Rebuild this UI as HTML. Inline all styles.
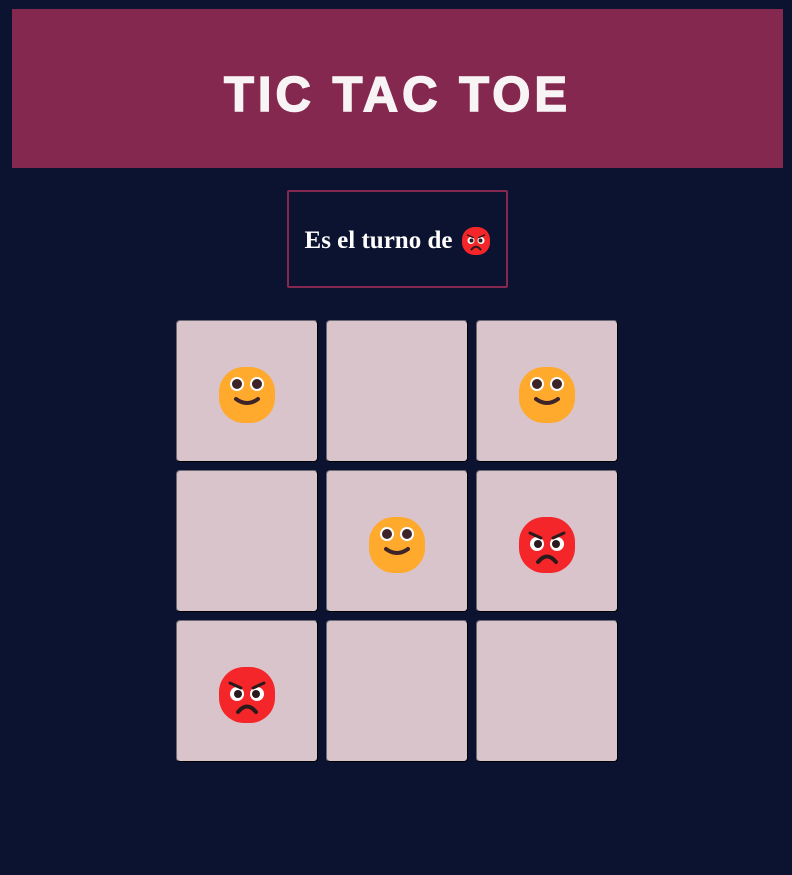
<!DOCTYPE html>
<html><head><style>
body{margin:0;background:#0c1330;width:792px;height:875px;position:relative;overflow:hidden;font-family:"Liberation Serif",serif}
.hdr{position:absolute;left:12px;top:9px;width:771px;height:159px;background:#85284f}
.hdr h1{margin:0;position:absolute;left:0;right:0;top:61px;text-align:center;color:#f8f4f6;font:900 49px/50px "Liberation Sans",sans-serif;letter-spacing:4px;-webkit-text-stroke:1.5px #f8f4f6}
.st{position:absolute;left:287px;top:190px;width:221px;height:98px;box-sizing:border-box;border:2px solid #85284f;border-radius:2px;color:#fff;font-weight:bold;font-size:25px;display:flex;align-items:center;justify-content:center;gap:10px;padding-top:4px}
.cell{position:absolute;width:140px;height:140px;background:#d9c4cc;border:1px solid;border-color:#6c6a74 #000 #000 #6c6a74;border-radius:4px}
.cell svg{position:absolute;left:42px;top:46px}
</style></head><body>
<div class="hdr"><h1>TIC TAC TOE</h1></div>
<div class="st">Es el turno de <svg width="28" height="28" viewBox="0 0 56 56"><use href="#a"/></svg></div>
<svg width="0" height="0" style="position:absolute">
<defs>
<g id="h"><rect x="0" y="0" width="56" height="56" rx="25" fill="#ffa92d"/>
<circle cx="18" cy="17" r="7" fill="#fff"/><circle cx="38" cy="17" r="7" fill="#fff"/>
<circle cx="18" cy="17" r="5" fill="#3d2428"/><circle cx="38" cy="17" r="5" fill="#3d2428"/>
<path d="M17 32Q28 40 39 32" stroke="#3d2428" stroke-width="4" fill="none" stroke-linecap="round"/></g>
<g id="a"><rect x="0" y="0" width="56" height="56" rx="25" fill="#f4262a"/>
<circle cx="18" cy="27" r="7" fill="#fff"/><circle cx="38" cy="27" r="7" fill="#fff"/>
<circle cx="19" cy="27" r="4" fill="#2a1a1c"/><circle cx="37" cy="27" r="4" fill="#2a1a1c"/>
<path d="M11 16L22 21M45 16L34 21" stroke="#2a1a1c" stroke-width="3" stroke-linecap="round"/>
<path d="M19 45Q28 34 37 45" stroke="#2a1a1c" stroke-width="4" fill="none" stroke-linecap="round"/></g>
</defs></svg>
<div class="cell" style="left:176px;top:320px"><svg width="56" height="56"><use href="#h"/></svg></div>
<div class="cell" style="left:326px;top:320px"></div>
<div class="cell" style="left:476px;top:320px"><svg width="56" height="56"><use href="#h"/></svg></div>
<div class="cell" style="left:176px;top:470px"></div>
<div class="cell" style="left:326px;top:470px"><svg width="56" height="56"><use href="#h"/></svg></div>
<div class="cell" style="left:476px;top:470px"><svg width="56" height="56"><use href="#a"/></svg></div>
<div class="cell" style="left:176px;top:620px"><svg width="56" height="56"><use href="#a"/></svg></div>
<div class="cell" style="left:326px;top:620px"></div>
<div class="cell" style="left:476px;top:620px"></div>
</body></html>
